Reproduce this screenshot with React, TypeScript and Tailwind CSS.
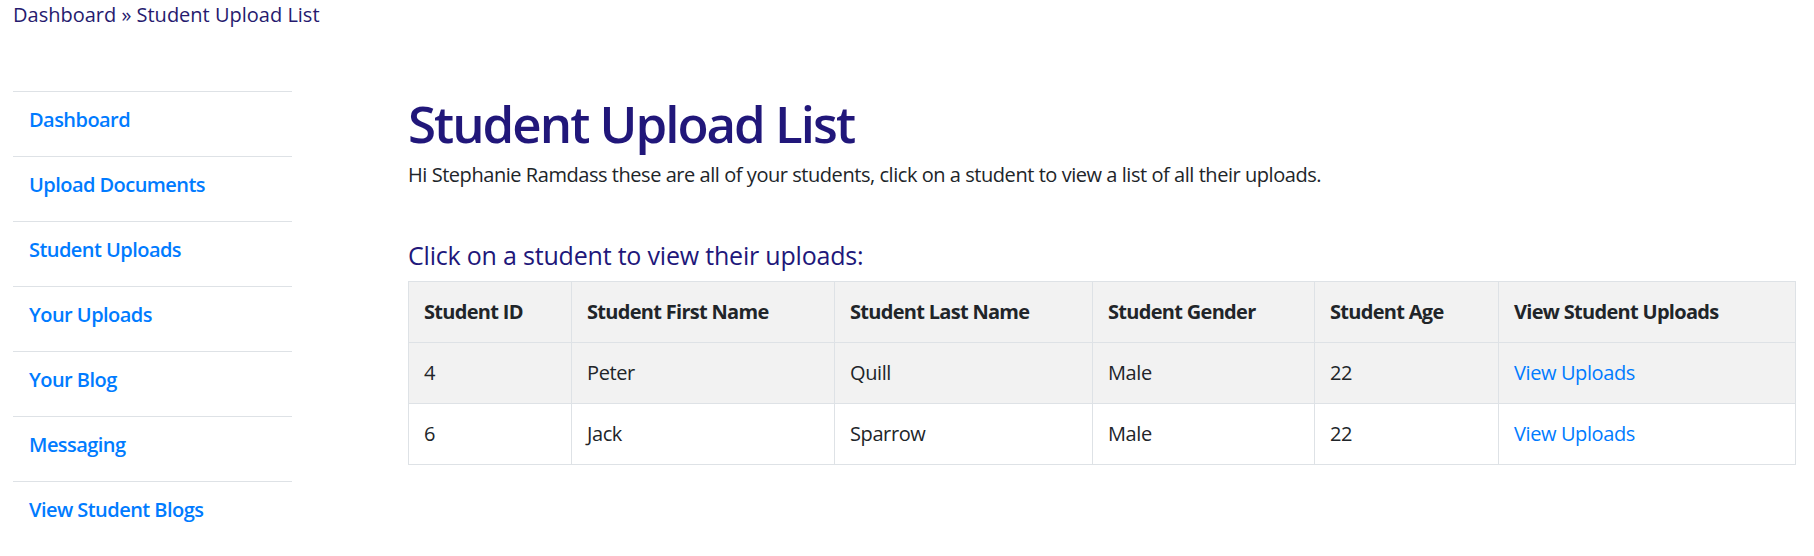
const navItems = [
  'Dashboard',
  'Upload Documents',
  'Student Uploads',
  'Your Uploads',
  'Your Blog',
  'Messaging',
  'View Student Blogs',
];

const students = [
  { id: 4, first: 'Peter', last: 'Quill', gender: 'Male', age: 22 },
  { id: 6, first: 'Jack', last: 'Sparrow', gender: 'Male', age: 22 },
];

const headers = [
  'Student ID',
  'Student First Name',
  'Student Last Name',
  'Student Gender',
  'Student Age',
  'View Student Uploads',
];

const cell = 'border border-[#dee2e6] px-[15px] py-[15px] leading-[30px] tracking-[-0.4px]';

export default function App() {
  return (
    <div className="min-h-[556px] bg-white font-['Open_Sans',sans-serif] text-[20px] text-[#212529]">
      <div className="h-[30px] px-[13px] leading-[30px] text-[#261a6e]">
        <a href="#">Dashboard</a> » Student Upload List
      </div>

      <div className="mt-[61px] flex">
        <nav className="ml-[13px] w-[279px] shrink-0">
          {navItems.map((item) => (
            <a
              key={item}
              href="#"
              className="block h-[65px] border-t border-[#dee2e6] pl-[16px] pt-[13px] leading-[30px] font-semibold tracking-[-0.55px] text-[#007bff]"
            >
              {item}
            </a>
          ))}
        </nav>

        <main className="ml-[116px] w-[1387px]">
          <h1 className="text-[51px] leading-[64px] font-semibold tracking-[-2px] text-[#21177a]">
            Student Upload List
          </h1>
          <p className="mt-[5px] leading-[30px] tracking-[-0.45px]">
            Hi Stephanie Ramdass these are all of your students, click on a
            student to view a list of all their uploads.
          </p>
          <h4 className="mt-[49px] text-[25px] leading-[32px] font-medium tracking-[-0.2px] text-[#21177a]">
            Click on a student to view their uploads:
          </h4>

          <table className="mt-[10px] w-full table-fixed border-collapse">
            <colgroup>
              <col className="w-[163px]" />
              <col className="w-[263px]" />
              <col className="w-[258px]" />
              <col className="w-[222px]" />
              <col className="w-[184px]" />
              <col className="w-[297px]" />
            </colgroup>
            <thead>
              <tr className="bg-[#f2f2f2]">
                {headers.map((h) => (
                  <th
                    key={h}
                    className="border border-[#dee2e6] px-[15px] py-[15px] text-left leading-[30px] font-bold tracking-[-0.7px]"
                  >
                    {h}
                  </th>
                ))}
              </tr>
            </thead>
            <tbody>
              {students.map((s, i) => (
                <tr key={s.id} className={i % 2 === 0 ? 'bg-[#f2f2f2]' : 'bg-white'}>
                  <td className={cell}>{s.id}</td>
                  <td className={cell}>{s.first}</td>
                  <td className={cell}>{s.last}</td>
                  <td className={cell}>{s.gender}</td>
                  <td className={cell}>{s.age}</td>
                  <td className={cell}>
                    <a href="#" className="text-[#007bff]">View Uploads</a>
                  </td>
                </tr>
              ))}
            </tbody>
          </table>
        </main>
      </div>
    </div>
  );
}
